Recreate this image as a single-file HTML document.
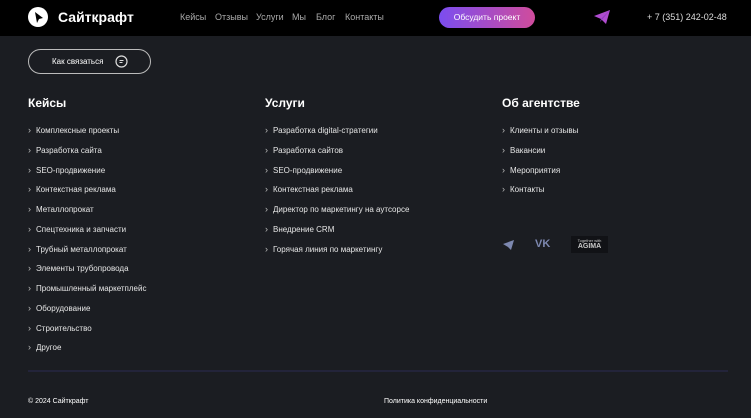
<!DOCTYPE html>
<html><head><meta charset="utf-8"><style>
*{margin:0;padding:0;box-sizing:border-box}
body{width:751px;height:418px;background:#1b1d22;font-family:"Liberation Sans",sans-serif;color:#fff;position:relative;overflow:hidden}
.hdr{position:absolute;left:0;top:0;width:751px;height:36px;background:#000}
.abs{position:absolute;white-space:nowrap}
.nav{top:12px;font-size:9px;color:#aaa}
.col h3{font-size:12px;font-weight:bold;position:absolute;top:96px;white-space:nowrap}
.col ul{list-style:none;position:absolute;top:125px}
.col li{font-size:8px;height:19.75px;line-height:10px;color:#e6e6e6;white-space:nowrap}
.col li:before{content:"›";color:#bbb;margin-right:5px;font-size:9px}
</style></head><body>
<div class="hdr"></div>
<svg class="abs" style="left:28px;top:7px" width="20" height="20" viewBox="0 0 20 20"><circle cx="10" cy="10" r="10" fill="#fff"/><path d="M7 5 L15 11 L11 12 L9 16 Z" fill="#000"/></svg>
<div class="abs" style="left:58px;top:9px;font-size:14px;font-weight:bold">Сайткрафт</div>
<div class="abs nav" style="left:180px">Кейсы</div>
<div class="abs nav" style="left:215px">Отзывы</div>
<div class="abs nav" style="left:256px">Услуги</div>
<div class="abs nav" style="left:292px">Мы</div>
<div class="abs nav" style="left:316px">Блог</div>
<div class="abs nav" style="left:345px">Контакты</div>
<div class="abs" style="left:439px;top:7px;width:96px;height:21px;border-radius:11px;background:linear-gradient(90deg,#7b4df0,#d04c9c);font-size:8.5px;text-align:center;line-height:21px">Обсудить проект</div>
<svg class="abs" style="left:594px;top:10px" width="16" height="14" viewBox="0 0 16 14"><path d="M0 6 L16 0 L12 14 L7 9 Z" fill="#b04cd0"/><path d="M7 9 L16 0 L6 12Z" fill="#8a3cc0"/></svg>
<div class="abs" style="left:647px;top:12px;font-size:9px;color:#ddd">+ 7 (351) 242-02-48</div>
<div class="abs" style="left:28px;top:49px;width:123px;height:25px;border:1px solid #bbb;border-radius:13px;font-size:8px;line-height:23px;padding-left:23px">Как связаться</div>
<svg class="abs" style="left:115px;top:55px" width="13" height="13" viewBox="0 0 13 13"><circle cx="6.5" cy="6.5" r="5.5" fill="none" stroke="#ddd" stroke-width="1.2"/><path d="M4.5 5.5h4M4.5 7.5h3" stroke="#ddd"/></svg>
<div class="col" style="position:absolute;left:28px"><h3>Кейсы</h3><ul style="width:200px"><li>Комплексные проекты</li><li>Разработка сайта</li><li>SEO-продвижение</li><li>Контекстная реклама</li><li>Металлопрокат</li><li>Спецтехника и запчасти</li><li>Трубный металлопрокат</li><li>Элементы трубопровода</li><li>Промышленный маркетплейс</li><li>Оборудование</li><li>Строительство</li><li>Другое</li></ul></div>
<div class="col" style="position:absolute;left:265px"><h3>Услуги</h3><ul style="width:200px"><li>Разработка digital-стратегии</li><li>Разработка сайтов</li><li>SEO-продвижение</li><li>Контекстная реклама</li><li>Директор по маркетингу на аутсорсе</li><li>Внедрение CRM</li><li>Горячая линия по маркетингу</li></ul></div>
<div class="col" style="position:absolute;left:502px"><h3>Об агентстве</h3><ul style="width:200px"><li>Клиенты и отзывы</li><li>Вакансии</li><li>Мероприятия</li><li>Контакты</li></ul></div>
<svg class="abs" style="left:503px;top:240px" width="11" height="10" viewBox="0 0 11 10"><path d="M0 4 L11 0 L8 10 L5 7Z" fill="#7d88b0"/></svg>
<div class="abs" style="left:535px;top:238px;font-size:11px;font-weight:bold;color:#7d88b0">VK</div>
<div class="abs" style="left:571px;top:236px;width:37px;height:17px;background:#111216;text-align:center;color:#ccc"><div style="font-size:4px;margin-top:2px">Together with</div><div style="font-size:7px;font-weight:bold">AGIMA</div></div>
<div class="abs" style="left:28px;top:370px;width:700px;height:2px;background:#23243a"></div>
<div class="abs" style="left:28px;top:398px;font-size:7px">© 2024 Сайткрафт</div>
<div class="abs" style="left:384px;top:398px;font-size:7px">Политика конфиденциальности</div>
</body></html>
